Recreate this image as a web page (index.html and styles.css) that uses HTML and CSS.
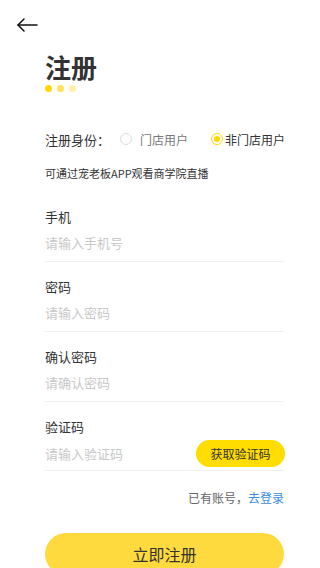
FILE: index.html
```html
<!DOCTYPE html>
<html lang="zh">
<head>
<meta charset="utf-8">
<meta name="viewport" content="width=device-width, initial-scale=1">
<title>注册</title>
<link rel="stylesheet" href="styles.css">
</head>
<body>
<div class="page">
  <div class="topbar">
    <svg class="back" width="22" height="14" viewBox="0 0 22 14" fill="none" stroke="#111" stroke-width="1.5" stroke-linecap="round" stroke-linejoin="round">
      <path d="M21 7H2"/>
      <path d="M8 1L2 7l6 6"/>
    </svg>
  </div>
  <div class="content">
    <h1 class="title">注册</h1>
    <div class="dots"><span class="dot d1"></span><span class="dot d2"></span><span class="dot d3"></span></div>

    <div class="identity">
      <span class="id-label">注册身份：</span>
      <span class="option"><span class="radio"></span><span class="opt-text">门店用户</span></span>
      <span class="option on"><span class="radio checked"></span><span class="opt-text">非门店用户</span></span>
    </div>

    <p class="hint">可通过宠老板APP观看商学院直播</p>

    <div class="field">
      <div class="label">手机</div>
      <div class="input">请输入手机号</div>
    </div>
    <div class="field">
      <div class="label">密码</div>
      <div class="input">请输入密码</div>
    </div>
    <div class="field">
      <div class="label">确认密码</div>
      <div class="input">请确认密码</div>
    </div>
    <div class="field code">
      <div class="label">验证码</div>
      <div class="code-row">
        <div class="input">请输入验证码</div>
        <button class="code-btn">获取验证码</button>
      </div>
    </div>

    <div class="login">已有账号，<span class="link">去登录</span></div>

    <button class="submit">立即注册</button>
  </div>
</div>
</body>
</html>
```

FILE: styles.css
```css
* { box-sizing: border-box; }
html, body { margin: 0; padding: 0; background: #fff; }
body {
  font-family: "Noto Sans CJK SC", "Noto Sans", sans-serif;
  color: #333;
  width: 320px;
  height: 568px;
  overflow: hidden;
}
.topbar {
  height: 50px;
  padding: 18px 0 0 16px;
}
.back { display: block; }
.content {
  padding: 0 36px 0 45px;
}
.title {
  margin: 0;
  font-size: 26px;
  font-weight: bold;
  line-height: 34px;
  color: #333;
}
.dots {
  display: flex;
  gap: 5px;
  height: 8px;
  align-items: center;
}
.dot { width: 7px; height: 7px; border-radius: 50%; display: block; }
.d1 { background: #FFD800; }
.d2 { background: #FFE35A; }
.d3 { background: #FFF0A6; }
.identity {
  display: flex;
  align-items: center;
  margin-top: 37px;
  height: 20px;
  font-size: 13px;
  white-space: nowrap;
}
.id-label { color: #333; width: 75px; flex-shrink: 0; }
.option {
  display: flex;
  align-items: center;
  font-size: 12px;
  color: #777;
  width: 91px;
  flex-shrink: 0;
}
.option.on { color: #333; width: auto; }
.radio {
  width: 12px; height: 12px;
  flex-shrink: 0;
  border: 1px solid #ddd;
  border-radius: 50%;
  margin-right: 8px;
  display: block;
  position: relative;
}
.option.on .radio { margin-right: 2px; }
.radio.checked {
  border: 1.5px solid #FFD800;
}
.radio.checked::after {
  content: "";
  position: absolute;
  left: 50%; top: 50%;
  width: 6px; height: 6px;
  margin: -3px 0 0 -3px;
  border-radius: 50%;
  background: #FFD800;
}
.hint {
  margin: 14px 0 0;
  font-size: 11px;
  line-height: 20px;
  color: #333;
}
.field {
  margin-top: 24px;
  padding-bottom: 8px;
  border-bottom: 1px solid #f0f0f0;
}
.field + .field { margin-top: 15px; }
.label {
  font-size: 13px;
  line-height: 20px;
  color: #333;
}
.input {
  margin-top: 6px;
  font-size: 13px;
  line-height: 20px;
  color: #c8c8c8;
}
.field.code { padding-bottom: 3px; }
.code-row {
  display: flex;
  align-items: center;
  justify-content: space-between;
  margin-top: 3px;
  height: 27px;
}
.code-row .input { margin-top: 0; }
.code-btn {
  border: none;
  background: #FFDD00;
  color: #333;
  font-family: inherit;
  font-size: 12px;
  height: 27px;
  width: 89px;
  border-radius: 14px;
  padding: 0;
  margin-right: -1px;
}
.login {
  text-align: right;
  margin-top: 17px;
  font-size: 12px;
  line-height: 20px;
  color: #666;
}
.link { color: #3D8FE6; }
.submit {
  display: block;
  width: 100%;
  margin-top: 25px;
  height: 42px;
  border: none;
  border-radius: 21px;
  background: #FFDA3E;
  color: #333;
  font-family: inherit;
  font-size: 16px;
}
```
